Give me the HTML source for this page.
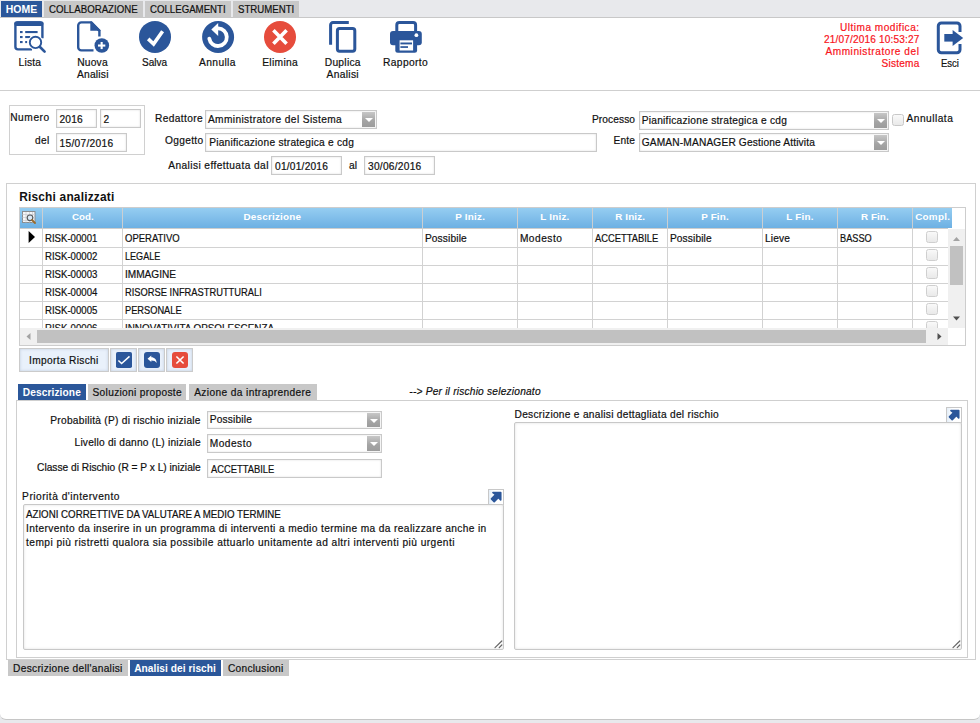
<!DOCTYPE html><html><head><meta charset="utf-8"><style>
html,body{margin:0;padding:0;}
body{width:980px;height:723px;overflow:hidden;background:#e8e9ec;position:relative;font-family:"Liberation Sans", sans-serif;color:#111;}
.t{position:absolute;white-space:nowrap;}
.inp{position:absolute;border:1px solid #c9c9c9;background:#fff;box-shadow:inset 0 0 2px rgba(0,0,0,0.16);}
.dd{position:absolute;background:linear-gradient(#c7c7c7,#a4a4a4 60%,#9c9c9c);}
.dd:after{content:"";position:absolute;left:2.6px;top:6px;border-left:4px solid transparent;border-right:4px solid transparent;border-top:4.5px solid #fff;}
</style></head><body>

<div style="position:absolute;left:0px;top:18px;width:980px;height:701px;background:#fff;border-bottom:1px solid #c6c6c6;border-radius:0 0 6px 6px;"></div>
<div style="position:absolute;left:0px;top:17px;width:980px;height:1px;background:#c8c8c8;"></div>
<div style="position:absolute;left:1px;top:1px;width:41px;height:16px;background:#2b579a;"></div>
<div class="t" id="t0" style="left:5.75px;top:5.43px;font-size:10.48px;line-height:10.48px;font-weight:700;color:#fff;letter-spacing:0.002px;">HOME</div>
<div style="position:absolute;left:44px;top:1px;width:99px;height:16px;background:#c8c8c8;"></div>
<div class="t" id="t1" style="left:49.00px;top:5.43px;font-size:10.48px;line-height:10.48px;-webkit-text-stroke:0.2px currentColor;transform:scaleX(0.9231);transform-origin:0 0;">COLLABORAZIONE</div>
<div style="position:absolute;left:145px;top:1px;width:86px;height:16px;background:#c8c8c8;"></div>
<div class="t" id="t2" style="left:149.50px;top:5.43px;font-size:10.48px;line-height:10.48px;-webkit-text-stroke:0.2px currentColor;transform:scaleX(0.9219);transform-origin:0 0;">COLLEGAMENTI</div>
<div style="position:absolute;left:233px;top:1px;width:66px;height:16px;background:#c8c8c8;"></div>
<div class="t" id="t3" style="left:237.50px;top:5.43px;font-size:10.48px;line-height:10.48px;-webkit-text-stroke:0.2px currentColor;transform:scaleX(0.9210);transform-origin:0 0;">STRUMENTI</div>
<div style="position:absolute;left:0px;top:90px;width:980px;height:1px;background:#cfcfcf;"></div>
<div class="t" id="t4" style="left:18.50px;top:58.40px;font-size:10.28px;line-height:10.28px;letter-spacing:0.197px;-webkit-text-stroke:0.2px currentColor;">Lista</div>
<div class="t" id="t5" style="left:77.20px;top:58.40px;font-size:10.28px;line-height:10.28px;letter-spacing:0.197px;-webkit-text-stroke:0.2px currentColor;">Nuova</div>
<div class="t" id="t6" style="left:142.10px;top:58.40px;font-size:10.28px;line-height:10.28px;-webkit-text-stroke:0.2px currentColor;transform:scaleX(0.9761);transform-origin:0 0;">Salva</div>
<div class="t" id="t7" style="left:199.10px;top:58.40px;font-size:10.28px;line-height:10.28px;letter-spacing:0.344px;-webkit-text-stroke:0.2px currentColor;">Annulla</div>
<div class="t" id="t8" style="left:262.20px;top:58.40px;font-size:10.28px;line-height:10.28px;letter-spacing:0.328px;-webkit-text-stroke:0.2px currentColor;">Elimina</div>
<div class="t" id="t9" style="left:324.70px;top:58.40px;font-size:10.28px;line-height:10.28px;letter-spacing:0.274px;-webkit-text-stroke:0.2px currentColor;">Duplica</div>
<div class="t" id="t10" style="left:383.00px;top:58.40px;font-size:10.28px;line-height:10.28px;letter-spacing:0.364px;-webkit-text-stroke:0.2px currentColor;">Rapporto</div>
<div class="t" id="t11" style="left:76.90px;top:70.40px;font-size:10.28px;line-height:10.28px;letter-spacing:0.217px;-webkit-text-stroke:0.2px currentColor;">Analisi</div>
<div class="t" id="t12" style="left:326.50px;top:70.40px;font-size:10.28px;line-height:10.28px;letter-spacing:0.317px;-webkit-text-stroke:0.2px currentColor;">Analisi</div>
<div class="t" id="t13" style="left:941.10px;top:59.40px;font-size:10.28px;line-height:10.28px;-webkit-text-stroke:0.2px currentColor;transform:scaleX(0.9268);transform-origin:0 0;">Esci</div>
<div class="t" id="t14" style="left:840.10px;top:22.76px;font-size:10.09px;line-height:10.09px;color:#f8141c;letter-spacing:0.483px;-webkit-text-stroke:0.2px currentColor;">Ultima modifica:</div>
<div class="t" id="t15" style="left:824.00px;top:34.71px;font-size:10.09px;line-height:10.09px;color:#f8141c;letter-spacing:0.159px;-webkit-text-stroke:0.2px currentColor;">21/07/2016 10:53:27</div>
<div class="t" id="t16" style="left:825.40px;top:46.66px;font-size:10.09px;line-height:10.09px;color:#f8141c;letter-spacing:0.561px;-webkit-text-stroke:0.2px currentColor;">Amministratore del</div>
<div class="t" id="t17" style="left:881.50px;top:58.61px;font-size:10.09px;line-height:10.09px;color:#f8141c;letter-spacing:0.236px;-webkit-text-stroke:0.2px currentColor;">Sistema</div>
<svg style="position:absolute;left:0;top:0" width="980" height="723" viewBox="0 0 980 723">
<path d="M32 49.4 H18 A2.6 2.6 0 0 1 15.4 46.8 V25 A2.6 2.6 0 0 1 18 22.4 H39.8 A2.6 2.6 0 0 1 42.4 25 V38.2" fill="none" stroke="#2b569a" stroke-width="2.4"/>
<rect x="14.2" y="21.2" width="29.4" height="4.7" rx="3" fill="#2b569a"/>
<rect x="15.5" y="23.5" width="27" height="2.4" fill="#2b569a"/>
<rect x="20" y="31" width="2.6" height="2.1" fill="#2b569a"/>
<rect x="20" y="36" width="2.6" height="2.1" fill="#2b569a"/>
<rect x="20" y="41" width="2.6" height="2.1" fill="#2b569a"/>
<rect x="25.2" y="31" width="12.4" height="2.1" fill="#2b569a"/>
<rect x="25.2" y="36" width="5" height="2.1" fill="#2b569a"/>
<rect x="25.2" y="41" width="1.9" height="2.1" fill="#2b569a"/>
<circle cx="35.5" cy="42.4" r="7.5" fill="#fff"/>
<circle cx="35.5" cy="42.4" r="5.7" fill="none" stroke="#2b569a" stroke-width="1.9"/>
<line x1="40" y1="47" x2="44.6" y2="51.6" stroke="#2b569a" stroke-width="2.6" stroke-linecap="round"/>

<path d="M99.4 36.4 V30.8 L91.2 22.4 H81.4 a3.2 3.2 0 0 0 -3.2 3.2 V47.2 a3.2 3.2 0 0 0 3.2 3.2 H93.5" fill="none" stroke="#2b569a" stroke-width="2.4"/>
<path d="M90.3 21.5 H92 L100.6 30.2 V30.7 H90.3 Z" fill="#2b569a"/>
<circle cx="101.8" cy="45.5" r="8.6" fill="#fff"/>
<circle cx="101.8" cy="45.5" r="7.3" fill="#2b569a"/>
<rect x="98" y="44.5" width="7.3" height="2.1" fill="#fff"/>
<rect x="100.6" y="42" width="2.1" height="7.1" fill="#fff"/>

<circle cx="155" cy="36.9" r="16" fill="#2b569a"/>
<polyline points="148.2,38.9 153.6,44 162.6,31.2" fill="none" stroke="#fff" stroke-width="3.6" stroke-linecap="butt" stroke-linejoin="miter"/>

<circle cx="218.1" cy="37" r="16" fill="#2b569a"/>
<path d="M209.3 38.6 A8.8 8.8 0 1 0 218.2 28.4" fill="none" stroke="#fff" stroke-width="3.8" stroke-linecap="round"/>
<polygon points="211.3,29.4 218.2,22.9 218.2,36" fill="#fff"/>

<circle cx="280" cy="37" r="16" fill="#e64c3c"/>
<path d="M273.4 30.3 L286.6 43.7 M286.6 30.3 L273.4 43.7" stroke="#fff" stroke-width="3.6"/>

<path d="M330.6 44.8 V25 a2.4 2.4 0 0 1 2.4 -2.4 H348.8" fill="none" stroke="#2b569a" stroke-width="3"/>
<rect x="337.4" y="28.6" width="17.4" height="22.6" rx="2.2" fill="none" stroke="#2b569a" stroke-width="3"/>

<rect x="396.8" y="22.4" width="18.8" height="12" rx="2.5" fill="none" stroke="#2b569a" stroke-width="3"/>
<rect x="390" y="31" width="31.8" height="14.2" rx="3" fill="#2b569a"/>
<rect x="395.3" y="38.8" width="21.8" height="14" rx="2.5" fill="#2b569a"/>
<rect x="399.6" y="40.3" width="13.5" height="10.2" fill="#fff"/>
<rect x="400.4" y="42.5" width="11.6" height="1.9" fill="#2b569a"/>
<rect x="400.4" y="46.2" width="7.6" height="1.7" fill="#2b569a"/>
<circle cx="416.4" cy="35.2" r="1.9" fill="#fff"/>

<path d="M960 32 V26 a3 3 0 0 0 -3 -3 H941.3 a3 3 0 0 0 -3 3 V49.8 a3 3 0 0 0 3 3 H957 a3 3 0 0 0 3 -3 V44" fill="none" stroke="#2b569a" stroke-width="3"/>
<rect x="944.3" y="34" width="9" height="7.6" fill="#2b569a"/>
<polygon points="952.6,30 963.2,37.9 952.6,45.9" fill="#2b569a"/>
</svg>
<div style="position:absolute;left:9px;top:105px;width:136px;height:50px;box-sizing:border-box;border:1px solid #d0d0d0;"></div>
<div class="t" id="t18" style="left:10.20px;top:112.87px;font-size:10.19px;line-height:10.19px;letter-spacing:0.576px;-webkit-text-stroke:0.2px currentColor;">Numero</div>
<div class="t" id="t19" style="left:35.10px;top:136.47px;font-size:10.19px;line-height:10.19px;letter-spacing:0.301px;-webkit-text-stroke:0.2px currentColor;">del</div>
<div class="inp" style="left:56px;top:109px;width:39px;height:17px;"></div>
<div class="t" id="t20" style="left:59.50px;top:114.77px;font-size:10.19px;line-height:10.19px;letter-spacing:0.183px;-webkit-text-stroke:0.2px currentColor;">2016</div>
<div class="inp" style="left:100px;top:109px;width:39px;height:17px;"></div>
<div class="t" id="t21" style="left:103.40px;top:114.77px;font-size:10.19px;line-height:10.19px;letter-spacing:0.533px;-webkit-text-stroke:0.2px currentColor;">2</div>
<div class="inp" style="left:56px;top:133px;width:69px;height:17px;"></div>
<div class="t" id="t22" style="left:59.50px;top:139.47px;font-size:10.19px;line-height:10.19px;letter-spacing:0.300px;-webkit-text-stroke:0.2px currentColor;">15/07/2016</div>
<div class="t" id="t23" style="left:155.10px;top:113.57px;font-size:10.19px;line-height:10.19px;letter-spacing:0.361px;-webkit-text-stroke:0.2px currentColor;">Redattore</div>
<div class="inp" style="left:205px;top:110px;width:170px;height:17px;"></div>
<div class="dd" style="left:362px;top:112px;width:13px;height:15px;"></div>
<div class="t" id="t24" style="left:207.90px;top:114.97px;font-size:10.19px;line-height:10.19px;letter-spacing:0.381px;-webkit-text-stroke:0.2px currentColor;">Amministratore del Sistema</div>
<div class="t" id="t25" style="left:165.00px;top:135.57px;font-size:10.19px;line-height:10.19px;letter-spacing:0.320px;-webkit-text-stroke:0.2px currentColor;">Oggetto</div>
<div class="inp" style="left:205px;top:133px;width:390px;height:17px;"></div>
<div class="t" id="t26" style="left:209.20px;top:138.07px;font-size:10.19px;line-height:10.19px;letter-spacing:0.240px;-webkit-text-stroke:0.2px currentColor;">Pianificazione strategica e cdg</div>
<div class="t" id="t27" style="left:168.20px;top:160.67px;font-size:10.19px;line-height:10.19px;letter-spacing:0.419px;-webkit-text-stroke:0.2px currentColor;">Analisi effettuata dal</div>
<div class="inp" style="left:271px;top:156px;width:69px;height:17px;"></div>
<div class="t" id="t28" style="left:275.10px;top:161.67px;font-size:10.19px;line-height:10.19px;letter-spacing:0.210px;-webkit-text-stroke:0.2px currentColor;">01/01/2016</div>
<div class="t" id="t29" style="left:349.00px;top:160.67px;font-size:10.19px;line-height:10.19px;letter-spacing:0.134px;-webkit-text-stroke:0.2px currentColor;">al</div>
<div class="inp" style="left:364px;top:156px;width:69px;height:17px;"></div>
<div class="t" id="t30" style="left:368.00px;top:161.67px;font-size:10.19px;line-height:10.19px;letter-spacing:0.260px;-webkit-text-stroke:0.2px currentColor;">30/06/2016</div>
<div class="t" id="t31" style="left:591.90px;top:114.87px;font-size:10.19px;line-height:10.19px;letter-spacing:0.103px;-webkit-text-stroke:0.2px currentColor;">Processo</div>
<div class="inp" style="left:639px;top:111px;width:248px;height:17px;"></div>
<div class="dd" style="left:874px;top:113px;width:13px;height:15px;"></div>
<div class="t" id="t32" style="left:641.70px;top:115.97px;font-size:10.19px;line-height:10.19px;letter-spacing:0.260px;-webkit-text-stroke:0.2px currentColor;">Pianificazione strategica e cdg</div>
<div class="t" id="t33" style="left:613.50px;top:135.67px;font-size:10.19px;line-height:10.19px;letter-spacing:0.184px;-webkit-text-stroke:0.2px currentColor;">Ente</div>
<div class="inp" style="left:639px;top:133px;width:248px;height:17px;"></div>
<div class="dd" style="left:874px;top:135px;width:13px;height:15px;"></div>
<div class="t" id="t34" style="left:641.70px;top:137.67px;font-size:10.19px;line-height:10.19px;letter-spacing:0.160px;-webkit-text-stroke:0.2px currentColor;">GAMAN-MANAGER Gestione Attivita</div>
<div style="position:absolute;left:892px;top:114px;width:12px;height:12px;box-sizing:border-box;border:1px solid #c8c8c8;border-radius:2.5px;background:linear-gradient(#f9f9f9,#e9e9e9);"></div>
<div class="t" id="t35" style="left:906.50px;top:113.67px;font-size:10.19px;line-height:10.19px;letter-spacing:0.490px;-webkit-text-stroke:0.2px currentColor;">Annullata</div>
<div style="position:absolute;left:6px;top:183px;width:970px;height:477px;box-sizing:border-box;border:1px solid #d0d0d0;"></div>
<div class="t" id="t36" style="left:19.20px;top:192.00px;font-size:11.93px;line-height:11.93px;font-weight:700;letter-spacing:0.185px;">Rischi analizzati</div>
<div style="position:absolute;left:19px;top:207px;width:947px;height:139px;background:#fff;"></div>
<div style="position:absolute;left:20px;top:208px;width:932px;height:20px;background:linear-gradient(#95cdf1,#6db0e3);"></div>
<div style="position:absolute;left:20px;top:228px;width:928px;height:1px;background:#cdcdcd;"></div>
<div style="position:absolute;left:42px;top:229px;width:1px;height:99px;background:#d2d2d2;"></div>
<div style="position:absolute;left:42px;top:208px;width:1px;height:20px;background:#cbcfd2;"></div>
<div style="position:absolute;left:122px;top:229px;width:1px;height:99px;background:#d2d2d2;"></div>
<div style="position:absolute;left:122px;top:208px;width:1px;height:20px;background:#cbcfd2;"></div>
<div style="position:absolute;left:422px;top:229px;width:1px;height:99px;background:#d2d2d2;"></div>
<div style="position:absolute;left:422px;top:208px;width:1px;height:20px;background:#cbcfd2;"></div>
<div style="position:absolute;left:517px;top:229px;width:1px;height:99px;background:#d2d2d2;"></div>
<div style="position:absolute;left:517px;top:208px;width:1px;height:20px;background:#cbcfd2;"></div>
<div style="position:absolute;left:592px;top:229px;width:1px;height:99px;background:#d2d2d2;"></div>
<div style="position:absolute;left:592px;top:208px;width:1px;height:20px;background:#cbcfd2;"></div>
<div style="position:absolute;left:667px;top:229px;width:1px;height:99px;background:#d2d2d2;"></div>
<div style="position:absolute;left:667px;top:208px;width:1px;height:20px;background:#cbcfd2;"></div>
<div style="position:absolute;left:762px;top:229px;width:1px;height:99px;background:#d2d2d2;"></div>
<div style="position:absolute;left:762px;top:208px;width:1px;height:20px;background:#cbcfd2;"></div>
<div style="position:absolute;left:837px;top:229px;width:1px;height:99px;background:#d2d2d2;"></div>
<div style="position:absolute;left:837px;top:208px;width:1px;height:20px;background:#cbcfd2;"></div>
<div style="position:absolute;left:912px;top:229px;width:1px;height:99px;background:#d2d2d2;"></div>
<div style="position:absolute;left:912px;top:208px;width:1px;height:20px;background:#cbcfd2;"></div>
<div class="t" id="t37" style="left:71.50px;top:211.93px;font-size:9.89px;line-height:9.89px;font-weight:700;color:#fff;transform:scaleX(0.9876);transform-origin:0 0;">Cod.</div>
<div class="t" id="t38" style="left:243.50px;top:211.93px;font-size:9.89px;line-height:9.89px;font-weight:700;color:#fff;letter-spacing:0.199px;">Descrizione</div>
<div class="t" id="t39" style="left:455.20px;top:211.93px;font-size:9.89px;line-height:9.89px;font-weight:700;color:#fff;letter-spacing:0.244px;">P Iniz.</div>
<div class="t" id="t40" style="left:540.30px;top:211.93px;font-size:9.89px;line-height:9.89px;font-weight:700;color:#fff;letter-spacing:0.194px;">L Iniz.</div>
<div class="t" id="t41" style="left:615.30px;top:211.93px;font-size:9.89px;line-height:9.89px;font-weight:700;color:#fff;letter-spacing:0.097px;">R Iniz.</div>
<div class="t" id="t42" style="left:701.30px;top:211.93px;font-size:9.89px;line-height:9.89px;font-weight:700;color:#fff;letter-spacing:0.126px;">P Fin.</div>
<div class="t" id="t43" style="left:786.20px;top:211.93px;font-size:9.89px;line-height:9.89px;font-weight:700;color:#fff;letter-spacing:0.219px;">L Fin.</div>
<div class="t" id="t44" style="left:861.00px;top:211.93px;font-size:9.89px;line-height:9.89px;font-weight:700;color:#fff;letter-spacing:0.055px;">R Fin.</div>
<div class="t" id="t45" style="left:915.20px;top:211.93px;font-size:9.89px;line-height:9.89px;font-weight:700;color:#fff;letter-spacing:0.248px;">Compl.</div>
<div style="position:absolute;left:20px;top:247px;width:928px;height:1px;background:#d2d2d2;"></div>
<div style="position:absolute;left:20px;top:265px;width:928px;height:1px;background:#d2d2d2;"></div>
<div style="position:absolute;left:20px;top:283px;width:928px;height:1px;background:#d2d2d2;"></div>
<div style="position:absolute;left:20px;top:301px;width:928px;height:1px;background:#d2d2d2;"></div>
<div style="position:absolute;left:20px;top:319px;width:928px;height:1px;background:#d2d2d2;"></div>
<div style="position:absolute;left:20px;top:229px;width:928px;height:99px;overflow:hidden;">
<div class="t" id="t46" style="left:24.90px;top:5.07px;font-size:10.19px;line-height:10.19px;-webkit-text-stroke:0.2px currentColor;transform:scaleX(0.9439);transform-origin:0 0;">RISK-00001</div>
<div class="t" id="t47" style="left:105.00px;top:5.07px;font-size:10.19px;line-height:10.19px;-webkit-text-stroke:0.2px currentColor;transform:scaleX(0.9336);transform-origin:0 0;">OPERATIVO</div>
<div class="t" id="t48" style="left:404.90px;top:5.07px;font-size:10.19px;line-height:10.19px;letter-spacing:0.136px;-webkit-text-stroke:0.2px currentColor;">Possibile</div>
<div class="t" id="t49" style="left:499.90px;top:5.07px;font-size:10.19px;line-height:10.19px;letter-spacing:0.502px;-webkit-text-stroke:0.2px currentColor;">Modesto</div>
<div class="t" id="t50" style="left:574.90px;top:5.07px;font-size:10.19px;line-height:10.19px;-webkit-text-stroke:0.2px currentColor;transform:scaleX(0.9203);transform-origin:0 0;">ACCETTABILE</div>
<div class="t" id="t51" style="left:649.90px;top:5.07px;font-size:10.19px;line-height:10.19px;letter-spacing:0.124px;-webkit-text-stroke:0.2px currentColor;">Possibile</div>
<div class="t" id="t52" style="left:744.90px;top:5.07px;font-size:10.19px;line-height:10.19px;letter-spacing:0.168px;-webkit-text-stroke:0.2px currentColor;">Lieve</div>
<div class="t" id="t53" style="left:819.90px;top:5.07px;font-size:10.19px;line-height:10.19px;-webkit-text-stroke:0.2px currentColor;transform:scaleX(0.9028);transform-origin:0 0;">BASSO</div>
<div style="position:absolute;left:906px;top:2px;width:12px;height:12px;box-sizing:border-box;border:1px solid #cfcfcf;border-radius:2.5px;background:linear-gradient(#f9f9f9,#e9e9e9);"></div>
<div class="t" id="t54" style="left:24.90px;top:23.07px;font-size:10.19px;line-height:10.19px;-webkit-text-stroke:0.2px currentColor;transform:scaleX(0.9439);transform-origin:0 0;">RISK-00002</div>
<div class="t" id="t55" style="left:105.00px;top:23.07px;font-size:10.19px;line-height:10.19px;-webkit-text-stroke:0.2px currentColor;transform:scaleX(0.8928);transform-origin:0 0;">LEGALE</div>
<div style="position:absolute;left:906px;top:20px;width:12px;height:12px;box-sizing:border-box;border:1px solid #cfcfcf;border-radius:2.5px;background:linear-gradient(#f9f9f9,#e9e9e9);"></div>
<div class="t" id="t56" style="left:24.90px;top:41.07px;font-size:10.19px;line-height:10.19px;-webkit-text-stroke:0.2px currentColor;transform:scaleX(0.9439);transform-origin:0 0;">RISK-00003</div>
<div class="t" id="t57" style="left:105.00px;top:41.07px;font-size:10.19px;line-height:10.19px;-webkit-text-stroke:0.2px currentColor;transform:scaleX(0.9919);transform-origin:0 0;">IMMAGINE</div>
<div style="position:absolute;left:906px;top:38px;width:12px;height:12px;box-sizing:border-box;border:1px solid #cfcfcf;border-radius:2.5px;background:linear-gradient(#f9f9f9,#e9e9e9);"></div>
<div class="t" id="t58" style="left:24.90px;top:59.07px;font-size:10.19px;line-height:10.19px;-webkit-text-stroke:0.2px currentColor;transform:scaleX(0.9439);transform-origin:0 0;">RISK-00004</div>
<div class="t" id="t59" style="left:105.00px;top:59.07px;font-size:10.19px;line-height:10.19px;-webkit-text-stroke:0.2px currentColor;transform:scaleX(0.9166);transform-origin:0 0;">RISORSE INFRASTRUTTURALI</div>
<div style="position:absolute;left:906px;top:56px;width:12px;height:12px;box-sizing:border-box;border:1px solid #cfcfcf;border-radius:2.5px;background:linear-gradient(#f9f9f9,#e9e9e9);"></div>
<div class="t" id="t60" style="left:24.90px;top:77.07px;font-size:10.19px;line-height:10.19px;-webkit-text-stroke:0.2px currentColor;transform:scaleX(0.9439);transform-origin:0 0;">RISK-00005</div>
<div class="t" id="t61" style="left:105.00px;top:77.07px;font-size:10.19px;line-height:10.19px;-webkit-text-stroke:0.2px currentColor;transform:scaleX(0.9102);transform-origin:0 0;">PERSONALE</div>
<div style="position:absolute;left:906px;top:74px;width:12px;height:12px;box-sizing:border-box;border:1px solid #cfcfcf;border-radius:2.5px;background:linear-gradient(#f9f9f9,#e9e9e9);"></div>
<div class="t" id="t62" style="left:24.90px;top:95.07px;font-size:10.19px;line-height:10.19px;-webkit-text-stroke:0.2px currentColor;transform:scaleX(0.9439);transform-origin:0 0;">RISK-00006</div>
<div class="t" id="t63" style="left:105.00px;top:95.07px;font-size:10.19px;line-height:10.19px;-webkit-text-stroke:0.2px currentColor;transform:scaleX(0.9694);transform-origin:0 0;">INNOVATIVITA OPSOLESCENZA</div>
<div style="position:absolute;left:906px;top:92px;width:12px;height:12px;box-sizing:border-box;border:1px solid #cfcfcf;border-radius:2.5px;background:linear-gradient(#f9f9f9,#e9e9e9);"></div>
</div>
<svg style="position:absolute;left:27px;top:230px" width="10" height="14" viewBox="0 0 10 14"><polygon points="1.6,1 8,7 1.6,13" fill="#000"/></svg>
<svg style="position:absolute;left:21px;top:210px" width="16" height="15" viewBox="0 0 16 15"><rect x="1.5" y="1.5" width="12.5" height="11" fill="#f4f6f8" stroke="#8a8d90" stroke-width="1"/>
<path d="M1.5 4.5 H14 M1.5 7.5 H14 M1.5 10.5 H14 M5 2 V12.5 M8.5 2 V12.5 M11.5 2 V12.5" stroke="#c8ccd0" stroke-width="0.7"/>
<circle cx="9" cy="7.8" r="2.8" fill="#dceaf6" stroke="#55595c" stroke-width="1.1"/>
<line x1="11" y1="10" x2="14" y2="13" stroke="#9a6a2a" stroke-width="1.8" stroke-linecap="round"/></svg>
<div style="position:absolute;left:948px;top:229px;width:17px;height:99px;background:#f0f0f0;"></div>
<div style="position:absolute;left:950px;top:246px;width:13px;height:39px;background:#c1c1c1;"></div>
<svg style="position:absolute;left:948px;top:229px" width="17" height="99" viewBox="0 0 17 99"><polygon points="5,12 12,12 8.5,8" fill="#a3a3a3"/><polygon points="5,87.5 12,87.5 8.5,91.5" fill="#505050"/></svg>
<div style="position:absolute;left:20px;top:328px;width:928px;height:17px;background:#f0f0f0;"></div>
<div style="position:absolute;left:37px;top:330px;width:889px;height:13px;background:#c1c1c1;"></div>
<svg style="position:absolute;left:20px;top:328px" width="928" height="17" viewBox="0 0 928 17"><polygon points="10.5,5 10.5,12 6.5,8.5" fill="#a3a3a3"/><polygon points="917.5,5 917.5,12 921.5,8.5" fill="#505050"/></svg>
<div style="position:absolute;left:948px;top:328px;width:17px;height:17px;background:#fff;"></div>
<div style="position:absolute;left:19px;top:207px;width:947px;height:139px;box-sizing:border-box;border:1px solid #cdcdcd;"></div>
<div style="position:absolute;left:19px;top:348px;width:90px;height:24px;box-sizing:border-box;border:1px solid #cbcbcb;background:#e9f1fb;box-shadow:inset 0 0 3px rgba(120,140,170,0.35);"></div>
<div class="t" id="t64" style="left:29.10px;top:355.77px;font-size:10.19px;line-height:10.19px;letter-spacing:0.327px;-webkit-text-stroke:0.2px currentColor;">Importa Rischi</div>
<div style="position:absolute;left:110px;top:348px;width:27px;height:24px;box-sizing:border-box;border:1px solid #cbcbcb;background:#e9f1fb;box-shadow:inset 0 0 3px rgba(120,140,170,0.35);"></div>
<div style="position:absolute;left:138px;top:348px;width:27px;height:24px;box-sizing:border-box;border:1px solid #cbcbcb;background:#e9f1fb;box-shadow:inset 0 0 3px rgba(120,140,170,0.35);"></div>
<div style="position:absolute;left:166px;top:348px;width:27px;height:24px;box-sizing:border-box;border:1px solid #cbcbcb;background:#e9f1fb;box-shadow:inset 0 0 3px rgba(120,140,170,0.35);"></div>
<svg style="position:absolute;left:116px;top:352px" width="16" height="16" viewBox="0 0 16 16"><rect x="0" y="0" width="16" height="16" rx="1.8" fill="#2b569a"/><polyline points="2.4,8.5 5.6,11.5 13.5,4.4" fill="none" stroke="#fff" stroke-width="1.5"/></svg>
<svg style="position:absolute;left:144px;top:352px" width="16" height="16" viewBox="0 0 16 16"><rect x="0" y="0" width="16" height="16" rx="3" fill="#2b569a"/><path d="M3.5 6.7 L7.3 3.6 V5.3 C10.5 5.3 12.5 7.5 12.7 11 C11.6 9.1 10 8.4 7.3 8.4 V10 Z" fill="#fff"/></svg>
<svg style="position:absolute;left:172px;top:352px" width="16" height="16" viewBox="0 0 16 16"><rect x="0" y="0" width="16" height="16" rx="3" fill="#e64c3c"/><path d="M4.4 4.5 L11.6 11.5 M11.6 4.5 L4.4 11.5" stroke="#fff" stroke-width="1.6"/></svg>
<div style="position:absolute;left:18px;top:384px;width:68px;height:16px;background:#2b579a;"></div>
<div class="t" id="t65" style="left:22.70px;top:387.57px;font-size:10.19px;line-height:10.19px;font-weight:700;color:#fff;letter-spacing:0.100px;">Descrizione</div>
<div style="position:absolute;left:88px;top:384px;width:98px;height:16px;background:#c8c8c8;"></div>
<div class="t" id="t66" style="left:92.50px;top:387.57px;font-size:10.19px;line-height:10.19px;letter-spacing:0.320px;-webkit-text-stroke:0.2px currentColor;">Soluzioni proposte</div>
<div style="position:absolute;left:189px;top:384px;width:128px;height:16px;background:#c8c8c8;"></div>
<div class="t" id="t67" style="left:194.20px;top:387.57px;font-size:10.19px;line-height:10.19px;letter-spacing:0.375px;-webkit-text-stroke:0.2px currentColor;">Azione da intraprendere</div>
<div class="t" id="t68" style="left:409.30px;top:386.57px;font-size:10.19px;line-height:10.19px;font-style:italic;letter-spacing:0.208px;-webkit-text-stroke:0.2px currentColor;">--&gt; Per il rischio selezionato</div>
<div style="position:absolute;left:16px;top:400px;width:952px;height:258px;box-sizing:border-box;border:1px solid #cfcfcf;"></div>
<div class="t" id="t69" style="left:50.30px;top:416.17px;font-size:10.19px;line-height:10.19px;letter-spacing:0.260px;-webkit-text-stroke:0.2px currentColor;">Probabilità (P) di rischio iniziale</div>
<div class="t" id="t70" style="left:74.50px;top:438.07px;font-size:10.19px;line-height:10.19px;letter-spacing:0.221px;-webkit-text-stroke:0.2px currentColor;">Livello di danno (L) iniziale</div>
<div class="t" id="t71" style="left:37.10px;top:462.57px;font-size:10.19px;line-height:10.19px;letter-spacing:0.004px;-webkit-text-stroke:0.2px currentColor;">Classe di Rischio (R = P x L) iniziale</div>
<div class="inp" style="left:207px;top:411px;width:173px;height:16px;"></div>
<div class="dd" style="left:367px;top:413px;width:13px;height:14px;"></div>
<div class="t" id="t72" style="left:209.70px;top:415.07px;font-size:10.19px;line-height:10.19px;letter-spacing:0.191px;-webkit-text-stroke:0.2px currentColor;">Possibile</div>
<div class="inp" style="left:207px;top:434px;width:173px;height:17px;"></div>
<div class="dd" style="left:367px;top:436px;width:13px;height:15px;"></div>
<div class="t" id="t73" style="left:209.70px;top:439.27px;font-size:10.19px;line-height:10.19px;letter-spacing:0.488px;-webkit-text-stroke:0.2px currentColor;">Modesto</div>
<div class="inp" style="left:207px;top:459px;width:173px;height:17px;"></div>
<div class="t" id="t74" style="left:210.70px;top:464.67px;font-size:10.19px;line-height:10.19px;-webkit-text-stroke:0.2px currentColor;transform:scaleX(0.9203);transform-origin:0 0;">ACCETTABILE</div>
<div class="t" id="t75" style="left:22.10px;top:491.57px;font-size:10.19px;line-height:10.19px;letter-spacing:0.501px;-webkit-text-stroke:0.2px currentColor;">Priorità d'intervento</div>
<div style="position:absolute;left:488px;top:489px;width:16px;height:16px;box-sizing:border-box;border:1px solid #c8c8c8;border-bottom:none;background:linear-gradient(90deg,#e4eef8,#fff 40%);"></div>
<svg style="position:absolute;left:488px;top:489px" width="16" height="16" viewBox="0 0 16 16"><polygon points="5,3.5 12.7,3.5 12.7,10.8 10.4,8.4 6.2,12.6 3.5,9.9 7.7,5.7" fill="#2b569a" stroke="#2b569a" stroke-width="1.7" stroke-linejoin="round"/></svg>
<div style="position:absolute;left:23px;top:504px;width:481px;height:146px;box-sizing:border-box;border:1px solid #c8c8c8;border-radius:2px;background:#fff;box-shadow:inset 0 0 3px rgba(0,0,0,0.13);"></div>
<svg style="position:absolute;left:493px;top:639px" width="10" height="10" viewBox="0 0 10 10"><path d="M2 8.6 L8.8 2 M6.2 8.6 L8.8 6" stroke="#666" stroke-width="1.2" stroke-linecap="round"/></svg>
<div class="t" id="t76" style="left:26.00px;top:510.17px;font-size:10.19px;line-height:10.19px;-webkit-text-stroke:0.2px currentColor;transform:scaleX(0.9553);transform-origin:0 0;">AZIONI CORRETTIVE DA VALUTARE A MEDIO TERMINE</div>
<div class="t" id="t77" style="left:26.00px;top:524.47px;font-size:10.19px;line-height:10.19px;letter-spacing:0.377px;-webkit-text-stroke:0.2px currentColor;">Intervento da inserire in un programma di interventi a medio termine ma da realizzare anche in</div>
<div class="t" id="t78" style="left:26.00px;top:538.47px;font-size:10.19px;line-height:10.19px;letter-spacing:0.447px;-webkit-text-stroke:0.2px currentColor;">tempi più ristretti qualora sia possibile attuarlo unitamente ad altri interventi più urgenti</div>
<div class="t" id="t79" style="left:514.50px;top:409.57px;font-size:10.19px;line-height:10.19px;letter-spacing:0.282px;-webkit-text-stroke:0.2px currentColor;">Descrizione e analisi dettagliata del rischio</div>
<div style="position:absolute;left:946px;top:407px;width:16px;height:16px;box-sizing:border-box;border:1px solid #c8c8c8;border-bottom:none;background:linear-gradient(90deg,#e4eef8,#fff 40%);"></div>
<svg style="position:absolute;left:946px;top:407px" width="16" height="16" viewBox="0 0 16 16"><polygon points="5,3.5 12.7,3.5 12.7,10.8 10.4,8.4 6.2,12.6 3.5,9.9 7.7,5.7" fill="#2b569a" stroke="#2b569a" stroke-width="1.7" stroke-linejoin="round"/></svg>
<div style="position:absolute;left:514px;top:422px;width:448px;height:228px;box-sizing:border-box;border:1px solid #c8c8c8;border-radius:2px;background:#fff;box-shadow:inset 0 0 3px rgba(0,0,0,0.13);"></div>
<svg style="position:absolute;left:951px;top:639px" width="10" height="10" viewBox="0 0 10 10"><path d="M2 8.6 L8.8 2 M6.2 8.6 L8.8 6" stroke="#666" stroke-width="1.2" stroke-linecap="round"/></svg>
<div style="position:absolute;left:8px;top:660px;width:120px;height:16px;background:#c8c8c8;"></div>
<div class="t" id="t80" style="left:13.10px;top:663.77px;font-size:10.19px;line-height:10.19px;letter-spacing:0.289px;-webkit-text-stroke:0.2px currentColor;">Descrizione dell'analisi</div>
<div style="position:absolute;left:130px;top:660px;width:91px;height:16px;background:#2b579a;"></div>
<div class="t" id="t81" style="left:134.20px;top:663.77px;font-size:10.19px;line-height:10.19px;font-weight:700;color:#fff;letter-spacing:0.051px;">Analisi dei rischi</div>
<div style="position:absolute;left:223px;top:660px;width:66px;height:16px;background:#c8c8c8;"></div>
<div class="t" id="t82" style="left:227.90px;top:663.77px;font-size:10.19px;line-height:10.19px;letter-spacing:0.284px;-webkit-text-stroke:0.2px currentColor;">Conclusioni</div>
</body></html>
